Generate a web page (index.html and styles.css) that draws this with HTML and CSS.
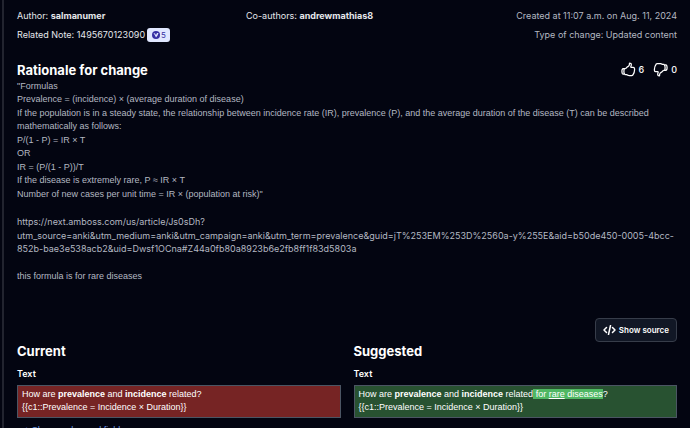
FILE: index.html
```html
<!DOCTYPE html>
<html lang="en">
<head>
<meta charset="UTF-8">
<meta name="viewport" content="width=device-width, initial-scale=1">
<title>Change suggestion</title>
<link rel="stylesheet" href="styles.css">
</head>
<body>
 <main class="suggestion">
  <div class="meta">
   <div class="meta_col">
    <div>Author: <b>salmanumer</b></div>
    <div class="related">
     <span>Related Note: 1495670123090</span>
     <span class="badge">
      <svg viewBox="0 0 16 16" width="8" height="8" aria-hidden="true">
       <circle cx="8" cy="8" r="8" fill="#3730a3"/>
       <path d="M3 4l3 1 2 3 2-4 3 0-2 5-3 4-2-4z" fill="#e0e7ff"/>
      </svg>
      5
     </span>
    </div>
   </div>
   <div class="meta_col">Co-authors: <b>andrewmathias8</b></div>
   <div class="meta_col meta_right">
    <div>Created at 11:07 a.m. on Aug. 11, 2024</div>
    <div>Type of change: Updated content</div>
   </div>
  </div>

  <div class="title_row">
   <h2>Rationale for change</h2>
   <div class="votes">
    <button type="button" class="vote" aria-label="Like">
     <svg class="thumb" viewBox="0 0 24 24" width="15" height="15" aria-hidden="true">
      <path d="M6.6 10.5c.8 0 1.5-.5 2-1.1a9 9 0 0 1 2.9-2.4c.7-.4 1.3-1 1.6-1.8.3-.7.4-1.2.4-1.9V2.6a.7.7 0 0 1 .8-.7 2.2 2.2 0 0 1 2.2 2.2c0 1.2-.3 2.3-.7 3.3-.3.5.1 1.1.7 1.1h3.1c1 0 1.9.7 2 1.7.5 4-.6 7.8-2.7 10.6-.4.5-1 .8-1.7.8h-4c-.5 0-1-.1-1.4-.2l-3.1-1.1c-.5-.1-.9-.2-1.4-.2H5.9M5.9 19.5c-1-1.3-1.3-2.8-1.3-4.5s.4-3 1-4.5H3.9c-.9 0-1.7.5-2 1.4a11 11 0 0 0 .2 6.6c.3.700 1 1 1.700 1z"/>
     </svg>
     6
    </button>
    <button type="button" class="vote" aria-label="Dislike">
     <svg class="thumb thumb_down" viewBox="0 0 24 24" width="15" height="15" aria-hidden="true">
      <path d="M6.6 10.5c.8 0 1.5-.5 2-1.1a9 9 0 0 1 2.9-2.4c.7-.4 1.3-1 1.6-1.8.3-.7.4-1.2.4-1.9V2.6a.7.7 0 0 1 .8-.7 2.2 2.2 0 0 1 2.2 2.2c0 1.2-.3 2.3-.7 3.3-.3.5.1 1.1.7 1.1h3.1c1 0 1.9.7 2 1.7.5 4-.6 7.8-2.7 10.6-.4.5-1 .8-1.7.8h-4c-.5 0-1-.1-1.4-.2l-3.1-1.1c-.5-.1-.9-.2-1.4-.2H5.9M5.9 19.5c-1-1.3-1.3-2.8-1.3-4.5s.4-3 1-4.5H3.9c-.9 0-1.7.5-2 1.4a11 11 0 0 0 .2 6.6c.3.700 1 1 1.700 1z"/>
     </svg>
     0
    </button>
   </div>
  </div>

  <div class="rationale">
   <p>"Formulas<br>
   Prevalence = (incidence) × (average duration of disease)<br>
   If the population is in a steady state, the relationship between incidence rate (IR), prevalence (P), and the average duration of the disease (T) can be described mathematically as follows:<br>
   P/(1 - P) = IR × T<br>
   OR<br>
   IR = (P/(1 - P))/T<br>
   If the disease is extremely rare, P ≈ IR × T<br>
   Number of new cases per unit time = IR × (population at risk)"</p>
   <p class="source_url">https://next.amboss.com/us/article/Js0sDh?<wbr>utm_source=anki&amp;utm_medium=anki&amp;utm_campaign=anki&amp;utm_term=prevalence&amp;guid=jT%253EM%253D%2560a-y%255E&amp;aid=b50de450-0005-4bcc-852b-bae3e538acb2&amp;uid=Dwsf1OCna#Z44a0fb80a8923b6e2fb8ff1f83d5803a</p>
   <p>this formula is for rare diseases</p>
  </div>

  <div class="tools">
   <button type="button" class="source_btn">
    <svg viewBox="0 0 26 20" width="13" height="10" aria-hidden="true">
     <path d="M7 5l-5 5 5 5M19 5l5 5-5 5M15 1l-4 18"/>
    </svg>
    Show source
   </button>
  </div>

  <div class="compare">
   <section>
    <h2>Current</h2>
    <h3>Text</h3>
    <div class="field field_old">How are <b>prevalence</b> and <b>incidence</b> related?<br>{{c1::Prevalence = Incidence × Duration}}</div>
   </section>
   <section>
    <h2>Suggested</h2>
    <h3>Text</h3>
    <div class="field field_new">How are <b>prevalence</b> and <b>incidence</b> related<ins> for <u>rare</u> diseases</ins>?<br>{{c1::Prevalence = Incidence × Duration}}</div>
   </section>
  </div>

  <a class="more" href="#fields">+ Show unchanged fields</a>
 </main>
</body>
</html>
```

FILE: styles.css
```css
* {
 box-sizing: border-box;
}

body {
 margin: 0;
 height: 100vh;
 overflow: hidden;
 background-color: #030511;
 color: #e5e7eb;
 font-family: "Liberation Sans", Arial, sans-serif;
 font-size: 9px;
 line-height: 1.5;
}

h2, h3, p {
 margin: 0;
}

h2, h3, .meta, .source_url {
 font-family: Inter, "Liberation Sans", sans-serif;
}

h2 {
 color: #fff;
 font-size: 13px;
 line-height: 18px;
}

h3 {
 color: #fff;
 font-size: 9px;
 font-weight: 600;
}

button {
 color: #fff;
 font-family: Inter, "Liberation Sans", sans-serif;
 cursor: pointer;
}

.suggestion {
 min-height: 100%;
 margin-left: 2px;
 padding: 9px 13px 0;
 border-left: 2px solid #22242f;
}

.meta {
 display: grid;
 grid-template-columns: 229px 1fr 1fr;
}

.meta_right {
 display: flex;
 flex-direction: column;
 gap: 5px;
 color: #b3b8c2;
 text-align: right;
}

.related {
 display: flex;
 align-items: center;
 gap: 2px;
 margin-top: 5px;
}

.badge {
 display: flex;
 align-items: center;
 gap: 1px;
 padding: 0 4px 0 5px;
 border-radius: 3px;
 background-color: #e0e7ff;
 color: #3730a3;
 font-size: 8px;
 line-height: 14px;
}

.title_row {
 display: flex;
 justify-content: space-between;
 align-items: center;
 margin: 19px 0 1px;
}

.votes {
 display: flex;
 gap: 9px;
}

.vote {
 display: flex;
 align-items: center;
 gap: 3px;
 padding: 0;
 border: 0;
 background: none;
 font-size: 9px;
 font-weight: 500;
}

.thumb {
 fill: none;
 stroke: #fff;
 stroke-width: 2;
 stroke-linejoin: round;
}

.thumb_down {
 transform: rotate(180deg);
}

.rationale {
 display: flex;
 flex-direction: column;
 gap: 14px;
 color: #b3b8c2;
}

.tools {
 display: flex;
 justify-content: flex-end;
 margin-top: 35px;
}

.source_btn {
 display: flex;
 align-items: center;
 gap: 3px;
 height: 24px;
 padding: 0 7px;
 border: 1px solid #373d4a;
 border-radius: 4px;
 background-color: #111725;
 font-size: 8px;
 font-weight: 600;
}

.source_btn svg {
 fill: none;
 stroke: #fff;
 stroke-width: 3;
 stroke-linecap: round;
 stroke-linejoin: round;
}

.compare {
 display: grid;
 grid-template-columns: 1fr 1fr;
 gap: 13px;
}

.compare h3 {
 margin: 7px 0 4px;
}

.field {
 padding: 2px 4px;
 border: 1px solid #4b5563;
 color: #fff;
}

.field_old {
 background-color: #762424;
}

.field_new {
 background-color: #285231;
}

ins {
 background-color: #4fb763;
 text-decoration: none;
}

.more {
 display: block;
 margin: 6px 0 0 7px;
 color: #6f9ae8;
 text-decoration: none;
}
```
